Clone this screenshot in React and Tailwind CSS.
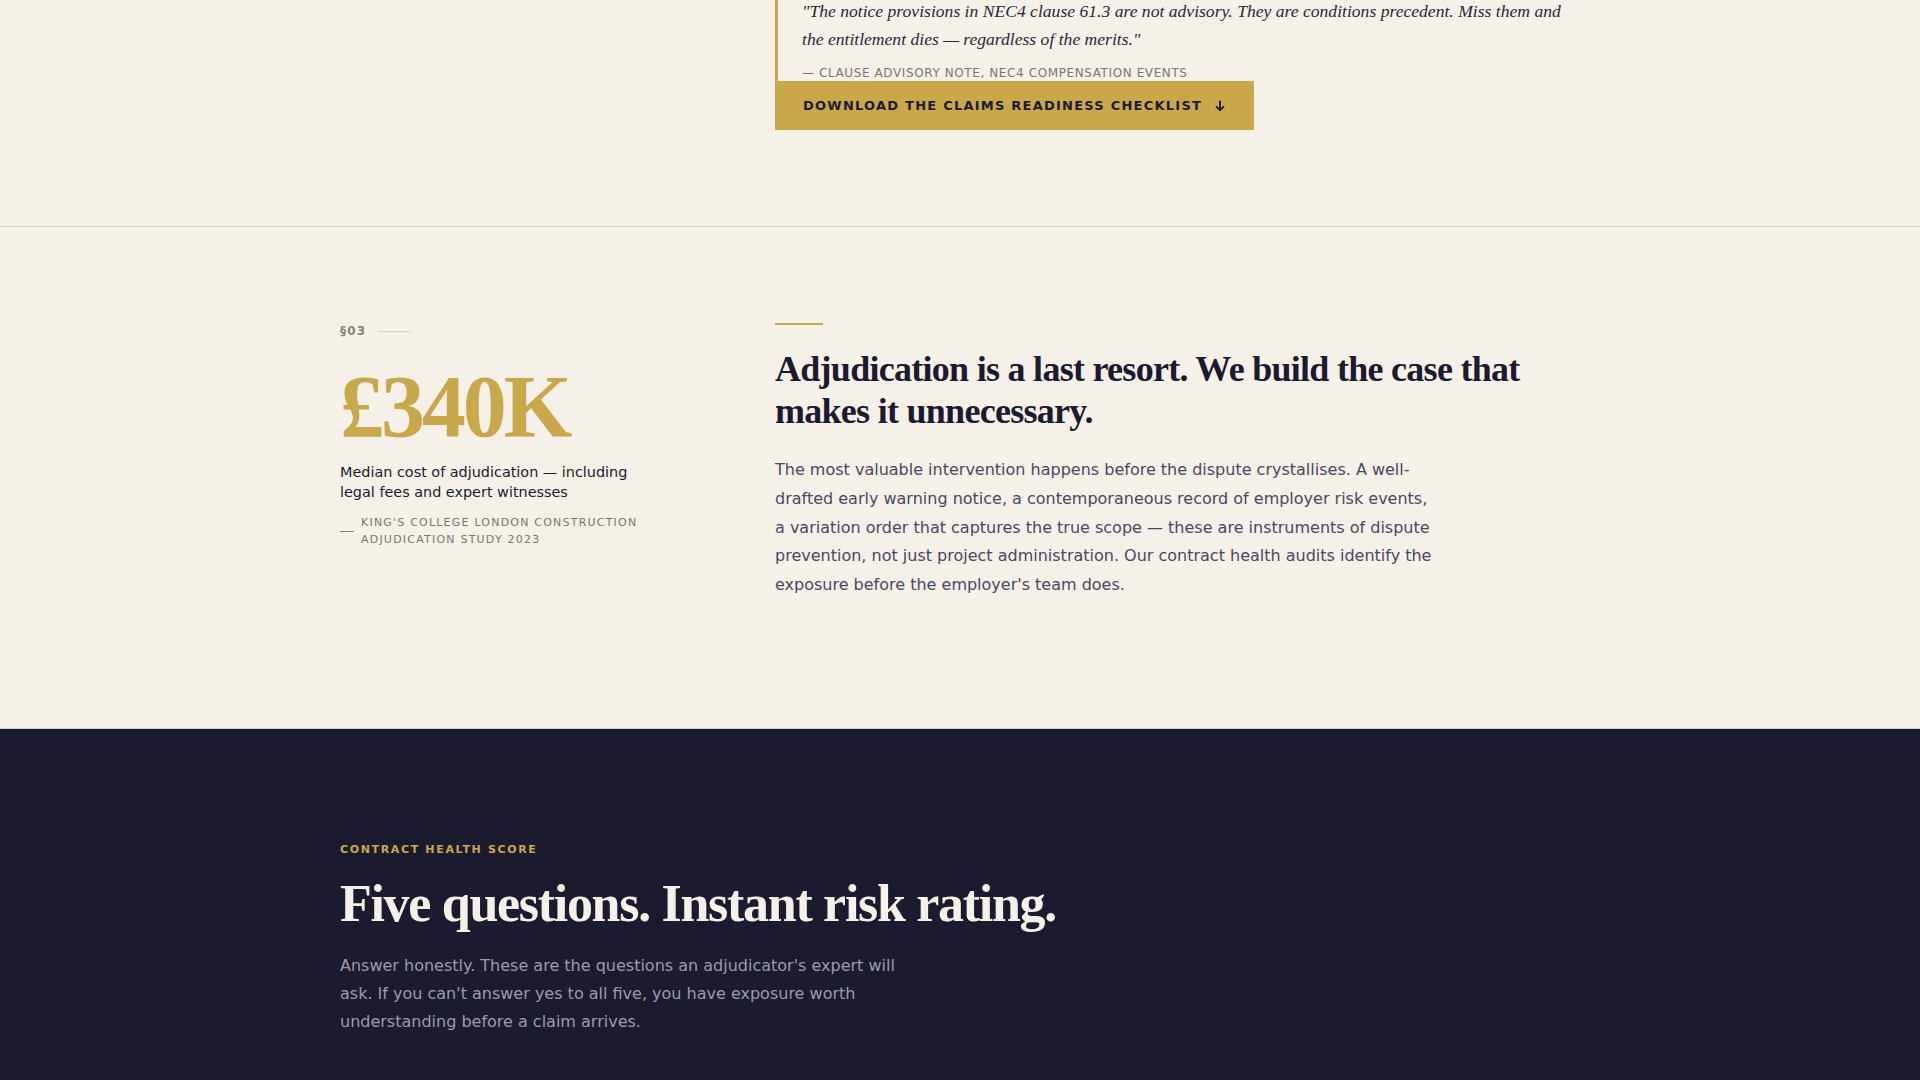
import React from "react";

const serif = { fontFamily: '"Liberation Serif", "Times New Roman", serif' };

function ArrowDown() {
  return (
    <svg width="12" height="12" viewBox="0 0 12 12" fill="none" stroke="currentColor" strokeWidth="1.8" strokeLinecap="round" strokeLinejoin="round">
      <path d="M6 1.5v8.5" />
      <path d="M2.5 6.8L6 10.2l3.5-3.4" />
    </svg>
  );
}

export default function App() {
  return (
    <div className="min-h-screen bg-[#f5f0e8] font-['DejaVu_Sans',sans-serif] text-[#1c1a2e]">
      {/* Quote + checklist download */}
      <section className="border-b border-[#d6d2c2]">
        <div className="mx-auto max-w-[1240px] -mt-[3px] pb-24">
          <div className="grid grid-cols-[340px_1fr] gap-[95px]">
            <div />
            <div>
              <blockquote className="border-l-[3px] border-[#c9a84c] pl-6">
                <p className="text-[17.6px] italic leading-[28px] text-[#2a2838]" style={serif}>
                  "The notice provisions in NEC4 clause 61.3 are not advisory. They are conditions precedent. Miss them and the entitlement dies — regardless of the merits."
                </p>
                <p className="mt-3 text-[12px] leading-4 uppercase tracking-[0.05em] text-[#7a776f]">
                  — Clause advisory note, NEC4 compensation events
                </p>
              </blockquote>
              <button className="flex h-[49px] items-center gap-3 bg-[#c9a84c] px-7 text-[13px] font-bold uppercase tracking-[0.095em] text-[#1c1a2e]">
                Download the claims readiness checklist
                <ArrowDown />
              </button>
            </div>
          </div>
        </div>
      </section>

      {/* §03 adjudication stat */}
      <section className="border-b border-[#d6d2c2]">
        <div className="mx-auto max-w-[1240px] pt-24 pb-[128px]">
          <div className="grid grid-cols-[340px_1fr] gap-[95px]">
            <div>
              <div className="flex items-center gap-3">
                <span className="text-[12px] font-bold leading-4 tracking-[0.1em] text-[#85827a]">§03</span>
                <span className="h-px w-8 bg-[#d6d2c2]" />
              </div>
              <div className="mt-6 text-[88px] font-bold leading-none tracking-[-0.035em] text-[#c9a84c]" style={serif}>
                £340K
              </div>
              <p className="mt-[11px] max-w-[310px] text-[14.4px] leading-5 text-[#1c1a2e]">
                Median cost of adjudication — including legal fees and expert witnesses
              </p>
              <div className="mt-3 flex items-center gap-[7px]">
                <span className="h-px w-[14px] shrink-0 bg-[#85827a]" />
                <span className="text-[11px] uppercase leading-[17px] tracking-[0.11em] text-[#7a776f]">
                  King's College London Construction Adjudication Study 2023
                </span>
              </div>
            </div>
            <div>
              <div className="h-[2px] w-12 bg-[#c9a84c]" />
              <h2 className="mt-[23px] text-[36px] font-bold leading-[42px] tracking-[-0.02em] text-[#1c1a2e]" style={serif}>
                Adjudication is a last resort. We build the case that makes it unnecessary.
              </h2>
              <p className="mt-6 max-w-[660px] text-[16px] leading-[28.8px] text-[#4a4860]">
                The most valuable intervention happens before the dispute crystallises. A well-drafted early warning notice, a contemporaneous record of employer risk events, a variation order that captures the true scope — these are instruments of dispute prevention, not just project administration. Our contract health audits identify the exposure before the employer's team does.
              </p>
            </div>
          </div>
        </div>
      </section>

      {/* Contract health score */}
      <section className="bg-[#1c1a2e]">
        <div className="mx-auto max-w-[1240px] pt-[113px] pb-24">
          <p className="text-[11px] font-bold uppercase leading-4 tracking-[0.15em] text-[#c9a84c]">
            Contract health score
          </p>
          <h2 className="mt-[17px] text-[52px] font-bold leading-[57px] tracking-[-0.025em] text-[#f5f0e8]" style={serif}>
            Five questions. Instant risk rating.
          </h2>
          <p className="mt-5 max-w-[576px] text-[16px] leading-[28px] text-[#9c9aab]">
            Answer honestly. These are the questions an adjudicator's expert will ask. If you can't answer yes to all five, you have exposure worth understanding before a claim arrives.
          </p>
        </div>
      </section>
    </div>
  );
}
